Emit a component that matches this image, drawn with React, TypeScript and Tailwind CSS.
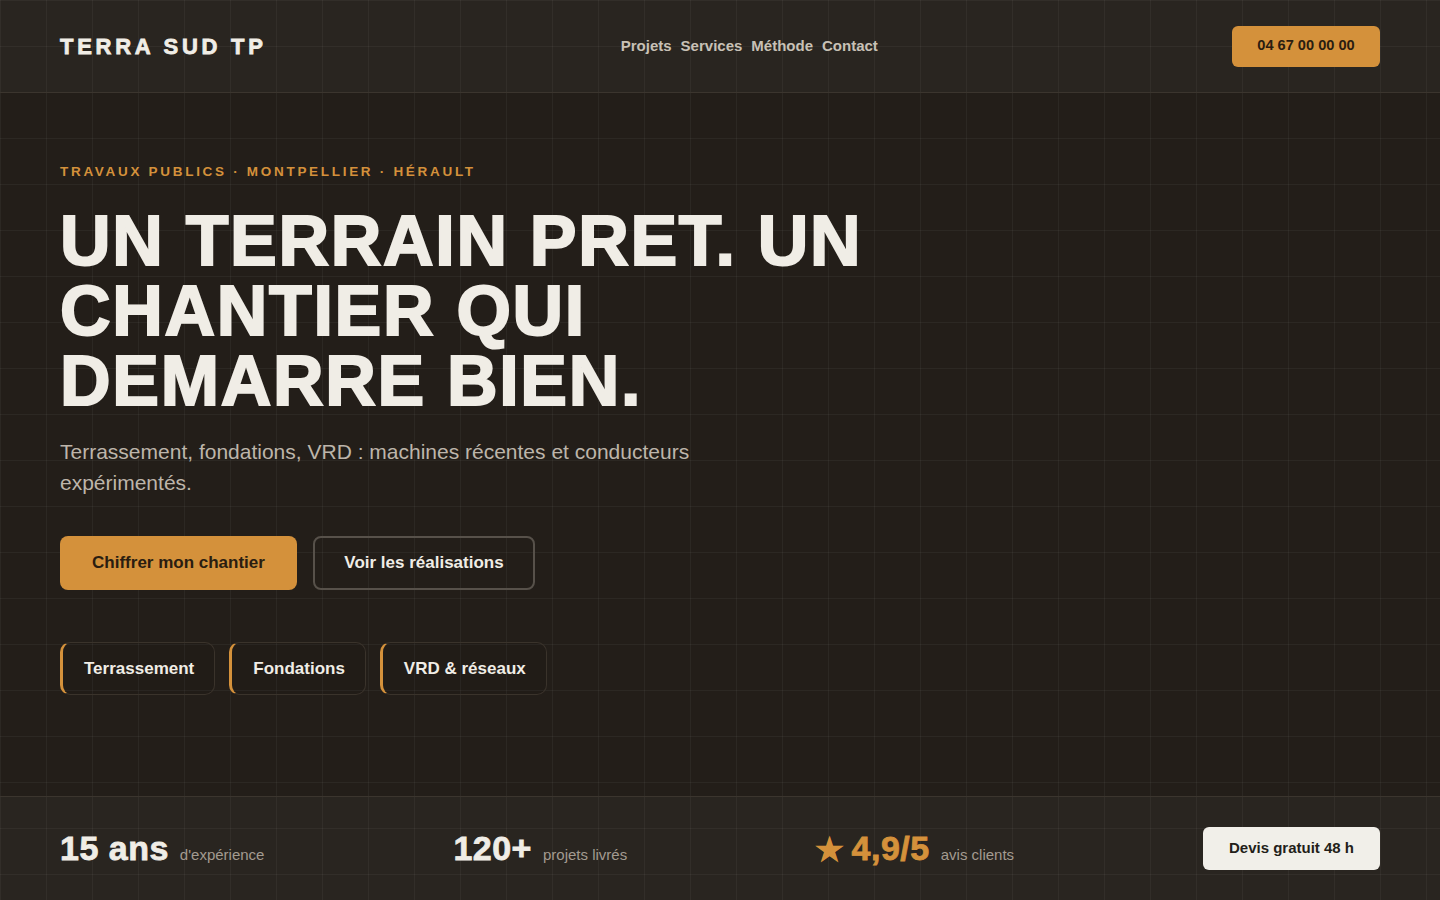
export default function App() {
  const stats = [
    { value: "15 ans", label: "d'expérience" },
    { value: "120+", label: "projets livrés" },
  ];

  return (
    <div className="flex h-screen flex-col overflow-hidden bg-[#231e19] bg-[linear-gradient(rgba(255,255,255,0.045)_1px,transparent_1px),linear-gradient(90deg,rgba(255,255,255,0.045)_1px,transparent_1px)] bg-[size:46px_46px] font-['Liberation_Sans',Arial,sans-serif] text-[#f0ede6]">
      <header className="flex h-[93px] shrink-0 items-center justify-between border-b border-[#3b352e] bg-white/[0.03] px-[60px]">
        <div className="text-[22px] font-black tracking-[0.17em] [-webkit-text-stroke:0.8px_#f0ede6]">
          TERRA SUD TP
        </div>
        <nav className="flex items-center gap-[9px] text-[15px] font-bold text-[#c8c1b6]">
          <a>Projets</a>
          <a>Services</a>
          <a>Méthode</a>
          <a>Contact</a>
        </nav>
        <a className="flex h-[41px] w-[148px] items-center justify-center rounded-[6px] bg-[#d4913b] text-[14.6px] font-bold text-[#2a1d10]">
          04 67 00 00 00
        </a>
      </header>

      <main className="flex-1 px-[60px] pt-[69px]">
        <p className="text-[13.5px] font-bold leading-5 tracking-[0.2em] text-[#d4913b]">
          TRAVAUX PUBLICS · MONTPELLIER · HÉRAULT
        </p>
        <h1 className="mt-6 max-w-[880px] text-[70px] font-black leading-[70px] tracking-[1.7px] [-webkit-text-stroke:2px_#f0ede6]">
          UN TERRAIN PRET. UN CHANTIER QUI DEMARRE BIEN.
        </h1>
        <p className="mt-5 max-w-[700px] text-[21px] leading-[31px] text-[#bdb5aa]">
          Terrassement, fondations, VRD : machines récentes et conducteurs expérimentés.
        </p>

        <div className="mt-[38px] flex gap-4">
          <a className="flex h-[54px] w-[237px] items-center justify-center rounded-lg bg-[#d4913b] text-[17px] font-bold text-[#2a1d10]">
            Chiffrer mon chantier
          </a>
          <a className="flex h-[54px] w-[222px] items-center justify-center rounded-lg border-2 border-[#57514a] text-[17px] font-bold text-[#f0ede6]">
            Voir les réalisations
          </a>
        </div>

        <div className="mt-[52px] flex gap-[14px]">
          {["Terrassement", "Fondations", "VRD & réseaux"].map((t) => (
            <div
              key={t}
              className="flex h-[53px] items-center rounded-[10px] border border-l-[3px] border-[#3a332b] border-l-[#d4913b] bg-black/[0.05] pl-[21px] pr-5 text-[17px] font-bold text-[#f0ede6]"
            >
              {t}
            </div>
          ))}
        </div>
      </main>

      <footer className="flex h-[104px] shrink-0 items-center justify-between border-t border-[#3b352e] bg-white/[0.03] px-[60px]">
        {stats.map((s) => (
          <div key={s.value} className="flex items-baseline gap-[11px]">
            <span className="text-[34px] font-black tracking-[0.5px] [-webkit-text-stroke:0.8px_#f0ede6]">{s.value}</span>
            <span className="text-[15px] text-[#a39b90]">{s.label}</span>
          </div>
        ))}
        <div className="flex items-baseline gap-[11px]">
          <span className="text-[34px] font-black tracking-[0.5px] text-[#d4913b] [-webkit-text-stroke:0.8px_#d4913b]">
            <span className="mr-[8px] text-[30px]">★</span>4,9/5
          </span>
          <span className="text-[15px] text-[#a39b90]">avis clients</span>
        </div>
        <a className="flex h-[43px] w-[177px] items-center justify-center rounded-[6px] bg-[#f1efe9] text-[15px] font-bold text-[#231e19]">
          Devis gratuit 48 h
        </a>
      </footer>
    </div>
  );
}
